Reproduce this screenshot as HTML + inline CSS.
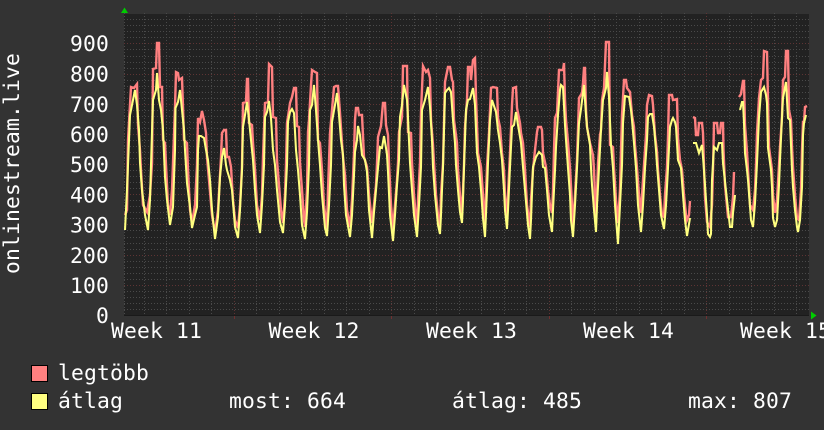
<!DOCTYPE html>
<html><head><meta charset="utf-8"><style>
html,body{margin:0;padding:0;background:#333;width:824px;height:430px;overflow:hidden}
svg{display:block}
text{font-family:"DejaVu Sans Mono","Liberation Mono",monospace;font-size:21.33px;letter-spacing:.16px;fill:#fff;white-space:pre}
</style></head><body>
<svg width="824" height="430" viewBox="0 0 824 430" xmlns="http://www.w3.org/2000/svg">
<rect width="824" height="430" fill="#333"/>
<rect x="124" y="14" width="685" height="302" fill="#222"/>
<path fill="none" stroke="#4a4a4a" stroke-dasharray="1 2" stroke-width="1" d="M124 309.5H809M124 303.5H809M124 297.5H809M124 291.5H809M124 279.5H809M124 273.5H809M124 267.5H809M124 261.5H809M124 249.5H809M124 243.5H809M124 237.5H809M124 230.5H809M124 218.5H809M124 212.5H809M124 206.5H809M124 200.5H809M124 188.5H809M124 182.5H809M124 176.5H809M124 170.5H809M124 158.5H809M124 152.5H809M124 146.5H809M124 140.5H809M124 128.5H809M124 122.5H809M124 116.5H809M124 110.5H809M124 98.5H809M124 92.5H809M124 86.5H809M124 80.5H809M124 68.5H809M124 62.5H809M124 56.5H809M124 49.5H809M124 37.5H809M124 31.5H809M124 25.5H809M124 19.5H809
M124.5 13V316M144.5 13V316M166.5 13V316M189.5 13V316M211.5 13V316M256.5 13V316M279.5 13V316M301.5 13V316M324.5 13V316M346.5 13V316M369.5 13V316M414.5 13V316M436.5 13V316M459.5 13V316M481.5 13V316M504.5 13V316M526.5 13V316M571.5 13V316M594.5 13V316M616.5 13V316M639.5 13V316M661.5 13V316M684.5 13V316M729.5 13V316M751.5 13V316M774.5 13V316M796.5 13V316"/>
<path fill="none" stroke="#5e3434" stroke-dasharray="1 2" stroke-width="1" d="M124 285.5H809M124 255.5H809M124 224.5H809M124 194.5H809M124 164.5H809M124 134.5H809M124 104.5H809M124 74.5H809M124 43.5H809M234.5 13V316M391.5 13V316M549.5 13V316M706.5 13V316"/>
<path fill="none" stroke="#703030" stroke-width="1" d="M234.5 316V319M391.5 316V319M549.5 316V319M706.5 316V319"/>
<path fill="none" stroke="#1a1a1a" stroke-width="1" d="M124 315.5H809"/>
<path fill="#0c0" d="M121 13L124.5 7.5L128 13Z"/>
<path fill="#0c0" d="M811 311.5L816.5 315.5L811 319.5Z"/>
<polyline fill="none" stroke="#ff8080" stroke-width="2.4" stroke-linejoin="miter" points="125,215 127,210 128,140 131,87 134,88 137,84 138,125 140,150 141,170 143,205 147,212 150,195 152,163 153,69 156,68 157,43 159,43 160,87 162,87 163,140 165,143 166,165 168,205 170,215 172,190 173,163 175,107 176,72 178,73 179,80 182,78 183,107 184,140 187,143 188,170 190,210 192,223 195,205 197,165 198,118 200,122 202,111 204,120 206,133 207,157 209,180 212,215 215,233 218,210 220,175 221,157 222,133 224,130 226,130 227,157 229,157 231,167 233,200 235,220 238,228 240,205 242,167 243,103 246,102 247,79 248,79 249,123 252,125 253,143 255,170 257,205 260,220 262,195 263,157 265,103 268,102 269,64 272,67 273,117 276,118 277,160 279,185 281,210 283,223 285,195 286,165 287,123 289,110 290,103 292,97 294,88 296,88 297,126 299,127 300,163 302,190 304,220 305,227 307,190 308,132 309,120 311,85 312,70 315,72 317,73 318,140 320,143 322,170 324,205 327,229 328,190 330,133 332,110 334,87 336,86 338,86 340,113 342,143 343,157 345,175 347,210 350,227 352,200 354,153 355,120 356,108 358,108 359,115 362,115 364,157 367,167 369,195 372,223 374,205 376,185 377,163 378,137 381,126 383,103 385,103 386,125 388,135 389,163 391,205 393,230 395,205 397,180 398,163 399,132 402,117 403,66 407,66 408,132 411,133 412,163 414,195 417,230 418,200 420,163 421,112 423,66 426,72 428,70 430,78 431,120 433,145 434,163 436,195 438,215 440,227 441,195 443,163 445,82 448,67 450,67 452,80 453,82 454,120 457,143 458,170 460,195 462,215 463,190 464,165 465,127 467,100 468,67 470,67 471,80 473,60 475,58 476,97 477,125 478,153 481,167 483,195 485,228 486,195 487,167 489,133 491,88 493,87 497,88 498,118 500,127 502,153 504,170 505,195 507,217 508,195 510,153 512,105 513,88 516,87 517,108 520,123 521,133 523,143 525,170 527,205 530,227 531,200 533,170 535,150 537,132 538,127 541,127 542,130 543,153 546,167 548,190 550,205 552,213 553,190 554,150 555,118 557,113 559,70 563,70 564,63 565,100 566,120 568,142 570,168 572,205 573,230 575,195 577,160 579,98 582,93 583,83 584,68 585,68 586,110 587,127 590,143 593,155 594,170 595,195 596,223 597,195 598,163 600,135 601,130 602,100 604,88 606,42 609,42 610,145 613,147 614,168 616,200 618,223 620,190 621,150 622,115 624,80 626,80 627,88 630,92 632,115 634,127 635,145 637,168 639,195 641,213 642,195 644,165 646,135 647,105 649,95 652,96 653,105 655,135 657,152 658,170 660,195 662,215 664,217 665,195 667,167 668,137 669,95 672,95 673,100 677,99 678,138 680,160 682,170 684,195 686,215 687,220 689,215 690,201"/>
<polyline fill="none" stroke="#ff8080" stroke-width="2.4" points="693,117 695,118 696,135 698,135 699,123 702,123 703,133 704,167 705,197 707,222 710,227 712,205 713,170 714,123 717,123 718,133 720,133 721,123 723,123 723.5,150 725,185 728,217 731,217 733,197 734,172"/>
<polyline fill="none" stroke="#ff8080" stroke-width="2.4" points="739,97 741,94 743,81 744,81 745,125 747,152 748,170 750,205 753,210 755,190 756,165 757,133 759,98 761,80 763,78 764,51 767,52 768,100 769,147 772,170 773,195 775,213 777,200 779,165 780,147 782,117 783,80 785,77 786,51 788,51 789,110 791,120 792,147 793,167 795,195 797,218 799,220 801,190 802,150 803,122 804,122 805,107 807,106"/>
<polyline fill="none" stroke="#ffff80" stroke-width="2.05" points="125,230 127,190 128,165 130,115 133,100 135,90 137,105 139,130 140,163 142,190 145,215 148,230 150,200 151,165 153,100 156,90 157,73 159,100 161,110 163,130 165,177 167,200 170,225 173,207 175,150 175.5,108 178,102 180,90 182,110 184,130 185,150 187,183 190,207 192,228 195,215 197,207 198,150 199,136 201,136 204,138 206,150 208,160 210,180 212,210 215,239 218,217 220,177 222,157 224,148 226,165 227,170 230,180 232,190 235,227 238,238 240,210 242,170 243,127 245,115 247,102 249,120 251,140 253,160 255,190 257,215 260,233 262,205 264,165 265,117 267,112 269,101 271,118 273,150 275,165 277,190 280,222 283,233 285,205 287,165 288,122 290,112 292,109 294,113 296,150 298,170 300,195 302,225 305,239 307,212 309,165 310,110 312,105 314,85 316,110 318,140 320,165 322,195 325,228 327,236 329,205 331,165 332,122 335,105 337,93 339,115 341,140 343,155 344,185 346,215 350,237 352,215 354,175 355,152 357,140 358,126 360,135 362,155 365,160 367,172 369,210 372,238 374,212 376,190 378,168 380,147 382,148 384,136 386,148 387,155 388,172 390,215 393,241 395,215 397,185 399,160 400,117 402,105 404,85 406,95 407,100 408,118 410,163 412,190 414,215 417,237 419,205 421,167 422,110 425,100 428,87 430,107 432,140 433,167 435,195 438,225 440,234 441,215 442,190 443,167 445,93 447,90 449,88 451,92 453,120 455,143 456,165 458,190 460,212 462,223 463,200 464,167 466,110 468,100 470,99 473,88 475,105 476,130 477,153 479,167 481,190 483,218 485,237 487,190 488,163 490,120 492,100 494,106 496,112 498,130 500,143 502,160 504,190 505,210 507,229 508,210 510,167 512,127 514,125 516,112 518,125 521,143 523,167 525,190 528,225 530,239 531,220 533,167 536,157 539,152 542,155 543,167 545,168 547,190 549,215 552,232 553,210 555,170 556,147 558,115 560,90 561,85 563,87 565,125 566,140 568,168 570,195 571,220 573,237 575,205 577,168 579,123 581,109 584,85 586,115 587,127 590,145 591,168 592,185 594,210 596,232 597,205 599,168 601,130 603,100 606,88 607,72 609,97 611,145 613,168 615,205 618,244 620,205 622,165 623,123 625,96 629,97 631,110 632,120 634,143 636,168 638,205 641,232 643,205 645,168 647,140 648,117 650,114 652,114 654,127 656,150 657,165 659,190 661,215 664,229 666,205 668,168 670,127 672,120 673,118 675,122 676,127 678,160 681,168 683,195 685,220 687,236 690,218"/>
<polyline fill="none" stroke="#ffff80" stroke-width="2.05" points="693,143 696,143 699,153 702,145 703,157 704,170 705,185 707,215 708,234 710,237 711,234 712,180 714,147 717,150 719,143 722,143 723,163 727,200 730,227 732,227 733,213 735,195"/>
<polyline fill="none" stroke="#ffff80" stroke-width="2.05" points="740,110 742,102 743,102 744,123 745,153 747,170 748,180 751,220 753,227 755,203 757,163 759,117 761,92 764,87 766,95 767,103 768,148 771,170 772,187 773,218 775,227 777,220 779,185 780,160 782,117 783,98 786,82 788,118 790,120 792,170 793,187 795,210 797,227 798,232 800,220 802,187 803,135 804,123 806,115"/>
<text x="70" y="51">900</text>
<text x="70" y="81.5">800</text>
<text x="70" y="112">700</text>
<text x="70" y="142">600</text>
<text x="70" y="172">500</text>
<text x="70" y="202.5">400</text>
<text x="70" y="232.5">300</text>
<text x="70" y="263">200</text>
<text x="70" y="293">100</text>
<text x="96" y="323">0</text>
<text x="111" y="338">Week 11</text>
<text x="268.5" y="338">Week 12</text>
<text x="426" y="338">Week 13</text>
<text x="583" y="338">Week 14</text>
<text x="740" y="338">Week 15</text>
<text transform="translate(19,274) rotate(-90)">onlinestream.live</text>
<rect x="31.5" y="365.5" width="16" height="16" fill="#ff8080" stroke="#000"/>
<rect x="31.5" y="393.5" width="16" height="16" fill="#ffff80" stroke="#000"/>
<text x="58" y="380">legtöbb</text>
<text x="58" y="408">átlag</text>
<text x="229" y="408">most: 664</text>
<text x="452" y="408">átlag: 485</text>
<text x="688" y="408">max: 807</text>
</svg>
</body></html>
